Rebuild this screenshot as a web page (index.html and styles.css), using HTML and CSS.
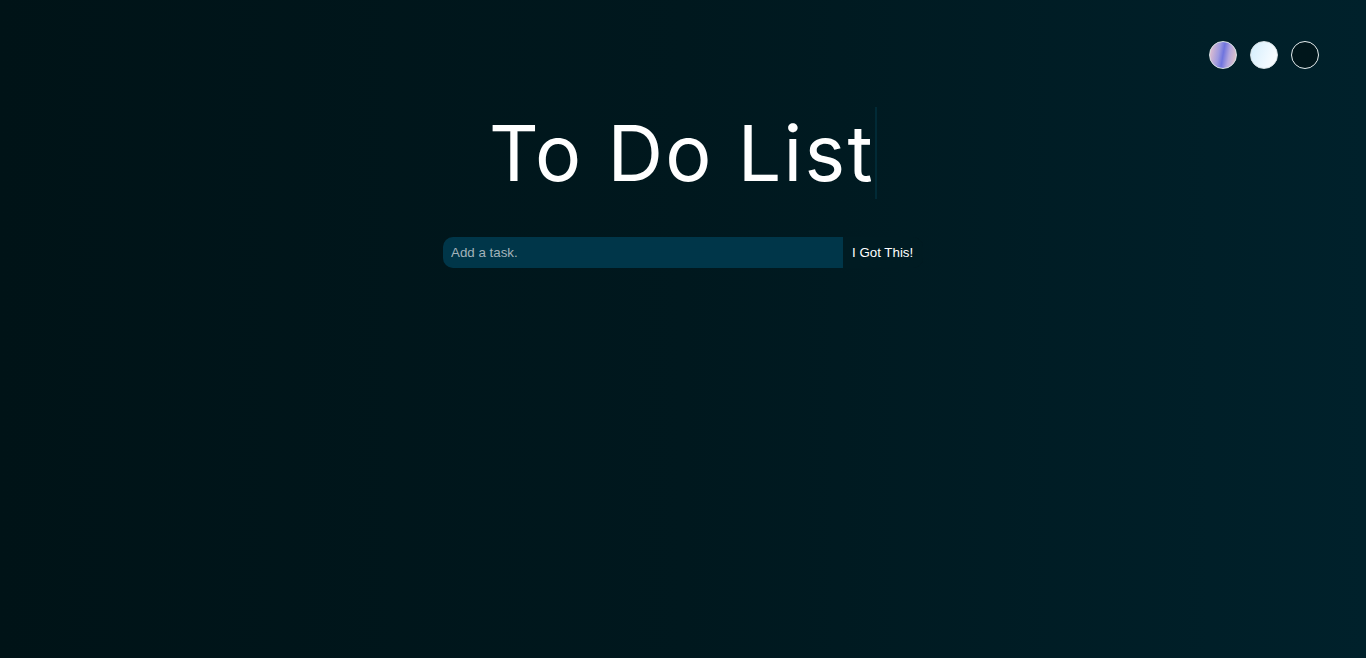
FILE: index.html
```html
<!DOCTYPE html>
<html lang="en">
<head>
<meta charset="utf-8">
<title>To Do List</title>
<link rel="stylesheet" href="styles.css">
</head>
<body>
<div class="page">
  <header class="themes">
    <button class="theme theme-standard" aria-label="Standard theme"></button>
    <button class="theme theme-light" aria-label="Light theme"></button>
    <button class="theme theme-darker" aria-label="Darker theme"></button>
  </header>
  <main class="main">
    <h1 class="title">To Do List</h1>
    <form class="todo-form">
      <input class="todo-input" type="text" placeholder="Add a task.">
      <button class="todo-button" type="button">I Got This!</button>
    </form>
  </main>
</div>
</body>
</html>
```
FILE: styles.css
```css
html, body {
  margin: 0;
  padding: 0;
  height: 100%;
}
body {
  background: linear-gradient(90deg, #001317 0%, #00181e 50%, #00212b 100%);
  color: #fff;
  font-family: "Liberation Sans", Arial, sans-serif;
  overflow: hidden;
}
.page {
  display: flex;
  flex-direction: column;
  min-height: 100vh;
}
.themes {
  display: flex;
  justify-content: flex-end;
  gap: 13px;
  padding: 41px 47px 0 0;
}
.theme {
  width: 28px;
  height: 28px;
  border-radius: 50%;
  border: 1px solid #d9e2e6;
  padding: 0;
  cursor: pointer;
}
.theme-standard {
  background: linear-gradient(100deg, #e0bfd0 5%, #9e9ae0 35%, #6f74de 50%, #b4a7de 70%, #e0c4c8 95%);
}
.theme-light {
  background: linear-gradient(110deg, #d4eefc 0%, #eef8ff 60%, #ffffff 100%);
}
.theme-darker {
  background: #00161b;
  border-color: #e6eef0;
}
.main {
  display: flex;
  flex-direction: column;
  align-items: center;
}
.title {
  margin: 38px 0 0 0;
  padding: 0;
  font-family: Inter, "Open Sans", sans-serif;
  font-weight: 400;
  font-size: 77px;
  letter-spacing: 2.3px;
  line-height: 92px;
  height: 92px;
  border-right: 2px solid #012a36;
}
.todo-form {
  display: flex;
  margin-top: 38px;
  height: 31px;
  border-radius: 10px;
  overflow: hidden;
  background: #001b22;
}
.todo-input {
  width: 400px;
  box-sizing: border-box;
  border: none;
  outline: none;
  background: #003649;
  color: #fff;
  font-family: "Liberation Sans", Arial, sans-serif;
  font-size: 13.333px;
  padding: 0 8px;
}
.todo-input::placeholder {
  color: #a3b3ba;
}
.todo-button {
  width: 80px;
  border: none;
  background: #001b22;
  color: #fff;
  font-family: "Liberation Sans", Arial, sans-serif;
  font-size: 13.333px;
  padding: 0 0 0 9px;
  white-space: nowrap;
  text-align: left;
  cursor: pointer;
}
```
